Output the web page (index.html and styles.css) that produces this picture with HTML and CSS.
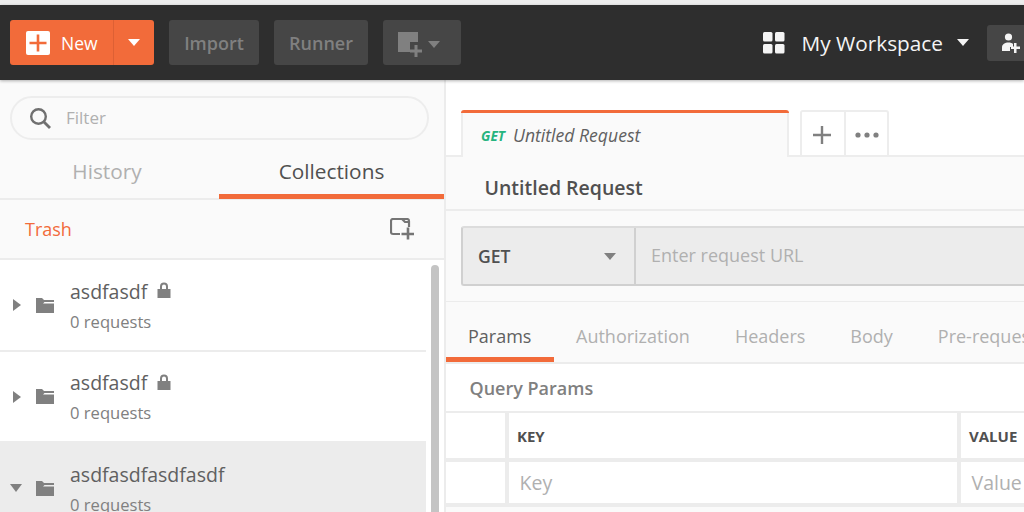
FILE: index.html
```html
<!DOCTYPE html>
<html lang="en">
<head>
<meta charset="utf-8">
<title>Postman</title>
<link rel="stylesheet" href="styles.css">
</head>
<body>
<div class="app">
  <header class="topbar">
    <div class="btn-new">
      <div class="new-main">
        <svg class="new-icon" width="24" height="24" viewBox="0 0 24 24"><rect width="24" height="24" rx="2" fill="#fff"/><path d="M12 3.500v17M3.500 12h17" stroke="#f26b3a" stroke-width="2.600"/></svg>
        <span>New</span>
      </div>
      <div class="new-caret"><svg width="12" height="7" viewBox="0 0 12 7"><path d="M0 0h12L6 7z" fill="#fff"/></svg></div>
    </div>
    <div class="btn-dark import">Import</div>
    <div class="btn-dark runner">Runner</div>
    <div class="btn-dark builder">
      <svg width="24" height="25" viewBox="0 0 24 25" fill="#808080"><path d="M0 0H20V10H12V20H0Z"/><path d="M16.500 13h3v4.500H24v3h-4.500V25h-3v-4.500H12v-3h4.500z"/></svg>
      <svg width="12" height="7" viewBox="0 0 12 7"><path d="M0 0h12L6 7z" fill="#808080"/></svg>
    </div>
    <div class="spacer"></div>
    <div class="workspace">
      <svg width="22" height="22" viewBox="0 0 22 22" fill="#f4f4f4"><rect width="9.500" height="9.500" rx="1.500"/><rect x="12" width="9.500" height="9.500" rx="1.500"/><rect y="12" width="9.500" height="9.500" rx="1.500"/><rect x="12" y="12" width="9.500" height="9.500" rx="1.500"/></svg>
      <span class="ws-name">My Workspace</span>
      <svg width="12" height="7" viewBox="0 0 12 7"><path d="M0 0h12L6 7z" fill="#f4f4f4"/></svg>
    </div>
    <div class="btn-invite">
      <svg width="19" height="20" viewBox="0 0 19 20" fill="#f4f4f4"><circle cx="7.500" cy="4" r="3.600"/><path d="M1 18v-3.500C1 11 4 9.500 7.500 9.500c2 0 3.500.5 4.500 1.500v3H9v4z"/><path d="M13 10h2.500v3.500H19V16h-3.500v4H13v-4H10v-2.500h3z"/></svg>
    </div>
  </header>
  <div class="body-row">
    <aside class="sidebar">
      <div class="search-wrap">
        <div class="search">
          <svg width="22" height="22" viewBox="0 0 22 22" fill="none" stroke="#707070"><circle cx="9.500" cy="9.500" r="7.300" stroke-width="2.400"/><path d="M15 15l6 6" stroke-width="2.800"/></svg>
          <span class="filter">Filter</span>
        </div>
      </div>
      <div class="side-tabs">
        <div class="side-tab history">History</div>
        <div class="side-tab active">Collections</div>
      </div>
      <div class="trash-row">
        <span class="trash">Trash</span>
        <svg width="24" height="22" viewBox="0 0 24 22" fill="none" stroke="#757575" stroke-width="2.200"><path d="M10 16H3a2 2 0 0 1-2-2V3a2 2 0 0 1 2-2h14a2 2 0 0 1 2 2v6M12 1l3 3h4"/><path d="M18 9.500v12M11.500 16h12.500" stroke-width="2.600"/></svg>
      </div>
      <div class="list-area">
        <div class="list">
          <div class="coll">
            <svg class="caret" width="8" height="12" viewBox="0 0 8 12"><path d="M0 0l8 6-8 6z" fill="#808080"/></svg>
            <svg class="folder" width="18" height="15" viewBox="0 0 18 15"><path d="M0 0h6l2 2h10v2H8.500L7 5.500H18V15H0z" fill="#808080"/></svg>
            <div class="coll-text">
              <div class="coll-name"><span>asdfasdf</span><svg class="lock" width="14" height="16" viewBox="0 0 14 16"><path d="M3 7V4.500a4 4 0 0 1 8 0V7h2.500v9H.5V7zm2 0h4V4.500a2 2 0 0 0-4 0z" fill="#808080"/></svg></div>
              <div class="coll-sub">0 requests</div>
            </div>
          </div>
          <div class="coll">
            <svg class="caret" width="8" height="12" viewBox="0 0 8 12"><path d="M0 0l8 6-8 6z" fill="#808080"/></svg>
            <svg class="folder" width="18" height="15" viewBox="0 0 18 15"><path d="M0 0h6l2 2h10v2H8.500L7 5.500H18V15H0z" fill="#808080"/></svg>
            <div class="coll-text">
              <div class="coll-name"><span>asdfasdf</span><svg class="lock" width="14" height="16" viewBox="0 0 14 16"><path d="M3 7V4.500a4 4 0 0 1 8 0V7h2.500v9H.5V7zm2 0h4V4.500a2 2 0 0 0-4 0z" fill="#808080"/></svg></div>
              <div class="coll-sub">0 requests</div>
            </div>
          </div>
          <div class="coll selected">
            <svg class="caret down" width="12" height="8" viewBox="0 0 12 8"><path d="M0 0h12L6 8z" fill="#808080"/></svg>
            <svg class="folder" width="18" height="15" viewBox="0 0 18 15"><path d="M0 0h6l2 2h10v2H8.500L7 5.500H18V15H0z" fill="#808080"/></svg>
            <div class="coll-text">
              <div class="coll-name"><span>asdfasdfasdfasdf</span></div>
              <div class="coll-sub">0 requests</div>
            </div>
          </div>
        </div>
        <div class="scroll-track"><div class="scroll-thumb"></div></div>
      </div>
    </aside>
    <main class="main">
      <div class="tabstrip">
        <div class="req-tab"><span class="get-tag">GET</span><span class="tab-title">Untitled Request</span></div>
        <div class="tab-tools">
          <div class="tool tool-plus"><svg width="18" height="18" viewBox="0 0 18 18"><path d="M9 0v18M0 9h18" stroke="#808080" stroke-width="2.400"/></svg></div>
          <div class="tool tool-more"><svg width="24" height="6" viewBox="0 0 24 6" fill="#808080"><circle cx="3" cy="3" r="2.600"/><circle cx="12" cy="3" r="2.600"/><circle cx="21" cy="3" r="2.600"/></svg></div>
        </div>
      </div>
      <div class="req-title"><span>Untitled Request</span></div>
      <div class="url-section">
        <div class="url-bar">
          <div class="method"><span>GET</span><svg width="12" height="7" viewBox="0 0 12 7"><path d="M0 0h12L6 7z" fill="#808080"/></svg></div>
          <div class="url-input">Enter request URL</div>
        </div>
      </div>
      <nav class="param-tabs">
        <div class="ptab active">Params</div>
        <div class="ptab">Authorization</div>
        <div class="ptab">Headers</div>
        <div class="ptab">Body</div>
        <div class="ptab">Pre-request Script</div>
      </nav>
      <div class="params">
        <div class="params-label">Query Params</div>
        <div class="grid">
          <div class="cell check"></div><div class="cell head">KEY</div><div class="cell head">VALUE</div>
          <div class="cell check"></div><div class="cell ph">Key</div><div class="cell ph">Value</div>
        </div>
      </div>
    </main>
  </div>
</div>
</body>
</html>
```
FILE: styles.css
```css
* { box-sizing: border-box; }
html, body { margin: 0; height: 512px; overflow: hidden; }
body { font-family: "Open Sans", sans-serif; background: #fff; color: #505050; }
.app { height: 512px; padding-top: 5px; background: #ededed; display: flex; flex-direction: column; overflow: hidden; }

.topbar { height: 75px; flex: none; display: flex; align-items: center; padding-left: 10px; background: #2e2e2e; box-shadow: 0 1px 3px rgba(0,0,0,.3); position: relative; z-index: 2; }
.btn-new { width: 144px; height: 45px; display: flex; background: #f26b3a; border-radius: 3px; color: #fff; font-size: 17.500px; font-weight: 500; }
.new-main { width: 104px; display: flex; align-items: center; padding-left: 16px; gap: 11px; border-right: 1px solid #dd6034; }
.new-caret { flex: 1; display: flex; align-items: center; justify-content: center; }
.btn-dark { height: 45px; display: flex; align-items: center; justify-content: center; background: #464646; border-radius: 3px; color: #808080; font-size: 18px; font-weight: 600; margin-left: 15px; }
.import { width: 90px; }
.runner { width: 94px; }
.builder { width: 78px; gap: 6px; justify-content: flex-start; padding-left: 15px; padding-top: 3px; }
.spacer { flex: 1; }
.workspace { display: flex; align-items: center; color: #f4f4f4; font-size: 20.800px; font-weight: 400; }
.ws-name { margin: 0 14px 0 16.500px; }
.btn-invite { width: 40px; height: 36px; margin-left: 18px; margin-right: -3px; background: #464646; border-radius: 3px 0 0 3px; display: flex; align-items: center; padding-left: 14px; }

.body-row { flex: 1; min-height: 0; display: flex; background: #fff; }
.sidebar { width: 446px; flex: none; background: #fafafa; border-right: 2px solid #ececec; display: flex; flex-direction: column; }
.search-wrap { padding: 16px 15px 0 10px; }
.search { height: 44px; border: 2px solid #ededed; border-radius: 22px; display: flex; align-items: center; padding-left: 17px; gap: 15px; }
.filter { color: #b0b0b0; font-size: 17px; padding-bottom: 2px; }
.side-tabs { height: 60px; display: flex; border-bottom: 2px solid #ececec; }
.side-tab { display: flex; align-items: center; justify-content: center; font-size: 20.800px; color: #b0b0b0; padding-top: 4px; }
.side-tab.history { width: 219px; padding-right: 5px; }
.side-tab.active { width: 225px; color: #505050; border-bottom: 5px solid #f26b3a; margin-bottom: -1px; padding-top: 8px; }
.trash-row { height: 60px; display: flex; align-items: center; justify-content: space-between; padding: 0 30px 0 25px; border-bottom: 2px solid #ececec; }
.trash { color: #f26b3a; font-size: 18px; }
.list-area { flex: 1; min-height: 0; display: flex; background: #fff; overflow: hidden; }
.list { width: 426px; flex: none; }
.coll { height: 91.500px; display: flex; align-items: center; border-bottom: 2px solid #ececec; padding-left: 13px; }
.coll.selected { background: #ececec; border-bottom: 0; padding-bottom: 2px; }
.caret { flex: none; margin-right: 15px; margin-top: 1px; }
.caret.down { margin-left: -3px; margin-right: 14px; }
.folder { flex: none; margin-right: 16px; margin-top: 1px; }
.coll-text { padding-top: 2px; }
.coll-name { display: flex; align-items: center; gap: 10px; font-size: 19.500px; color: #606060; line-height: 25px; }
.lock { margin-top: -2px; }
.coll-sub { font-size: 16.600px; color: #808080; margin-top: 7px; line-height: 22px; }
.scroll-track { flex: 1; padding: 5px 5px 0; }
.scroll-thumb { height: 300px; background: #c4c4c4; border-radius: 4px; }

.main { flex: 1; min-width: 0; display: flex; flex-direction: column; background: #fafafa; }
.tabstrip { height: 77px; flex: none; padding: 30px 0 0 15px; display: flex; background: #fff; border-bottom: 2px solid #ededed; }
.req-tab { width: 328px; height: 47px; margin-bottom: -2px; background: #fafafa; border-top: 3px solid #f26b3a; box-shadow: inset 2px 0 #ededed, inset -2px 0 #ededed; border-radius: 3px 3px 0 0; display: flex; align-items: center; padding-left: 20px; gap: 8px; }
.get-tag { color: #26b47f; font-size: 13.600px; font-weight: 700; font-style: italic; }
.tab-title { color: #606060; font-size: 17.600px; font-style: italic; }
.tab-tools { display: flex; margin-left: 11px; height: 47px; border: 2px solid #ededed; border-bottom: 0; border-radius: 3px 3px 0 0; }
.tool { width: 44px; display: flex; align-items: center; justify-content: center; }
.tool-plus { border-right: 2px solid #ededed; padding-right: 2px; }
.tool-more { width: 41px; }
.req-title { height: 54px; flex: none; display: flex; align-items: center; padding: 8px 0 0 38.500px; border-bottom: 2px solid #ececec; font-size: 19.500px; font-weight: 600; color: #505050; }
.url-section { height: 91px; flex: none; padding: 15px 0 0 15px; border-bottom: 1px solid #ececec; }
.url-bar { height: 60px; display: flex; background: #ececec; border: 2px solid #d0d0d0; border-right: 0; border-top-color: #dcdcdc; border-radius: 3px 0 0 3px; }
.method { width: 173px; flex: none; display: flex; align-items: center; justify-content: space-between; padding: 0 18px 0 15px; border-right: 2px solid #d0d0d0; font-size: 17.600px; font-weight: 600; }
.url-input { padding: 0 0 2px 15px; display: flex; align-items: center; color: #b0b0b0; font-size: 18px; }
.param-tabs { height: 62px; flex: none; display: flex; border-bottom: 2px solid #ececec; white-space: nowrap; }
.ptab { padding: 8px 22.500px 0; display: flex; align-items: center; font-size: 18px; color: #b0b0b0; }
.ptab.active { width: 107.500px; flex: none; color: #606060; border-bottom: 5px solid #f26b3a; padding: 13px 0 0 22px; }
.params { flex: 1; background: #fafafa; }
.params-label { height: 47px; display: flex; align-items: center; padding-left: 23.500px; font-size: 18px; font-weight: 600; color: #808080; background: #fff; }
.grid { display: grid; grid-template-columns: 58.500px 447.500px 1fr; grid-template-rows: 45px 41px; column-gap: 4.500px; row-gap: 4px; background: #ececec; padding: 2px 0 4px; }
.cell { background: #fff; display: flex; align-items: center; }
.head { font-size: 15px; font-weight: 700; color: #505050; padding-left: 8px; }
.ph { font-size: 19.500px; color: #b0b0b0; padding-left: 10.500px; }
```
